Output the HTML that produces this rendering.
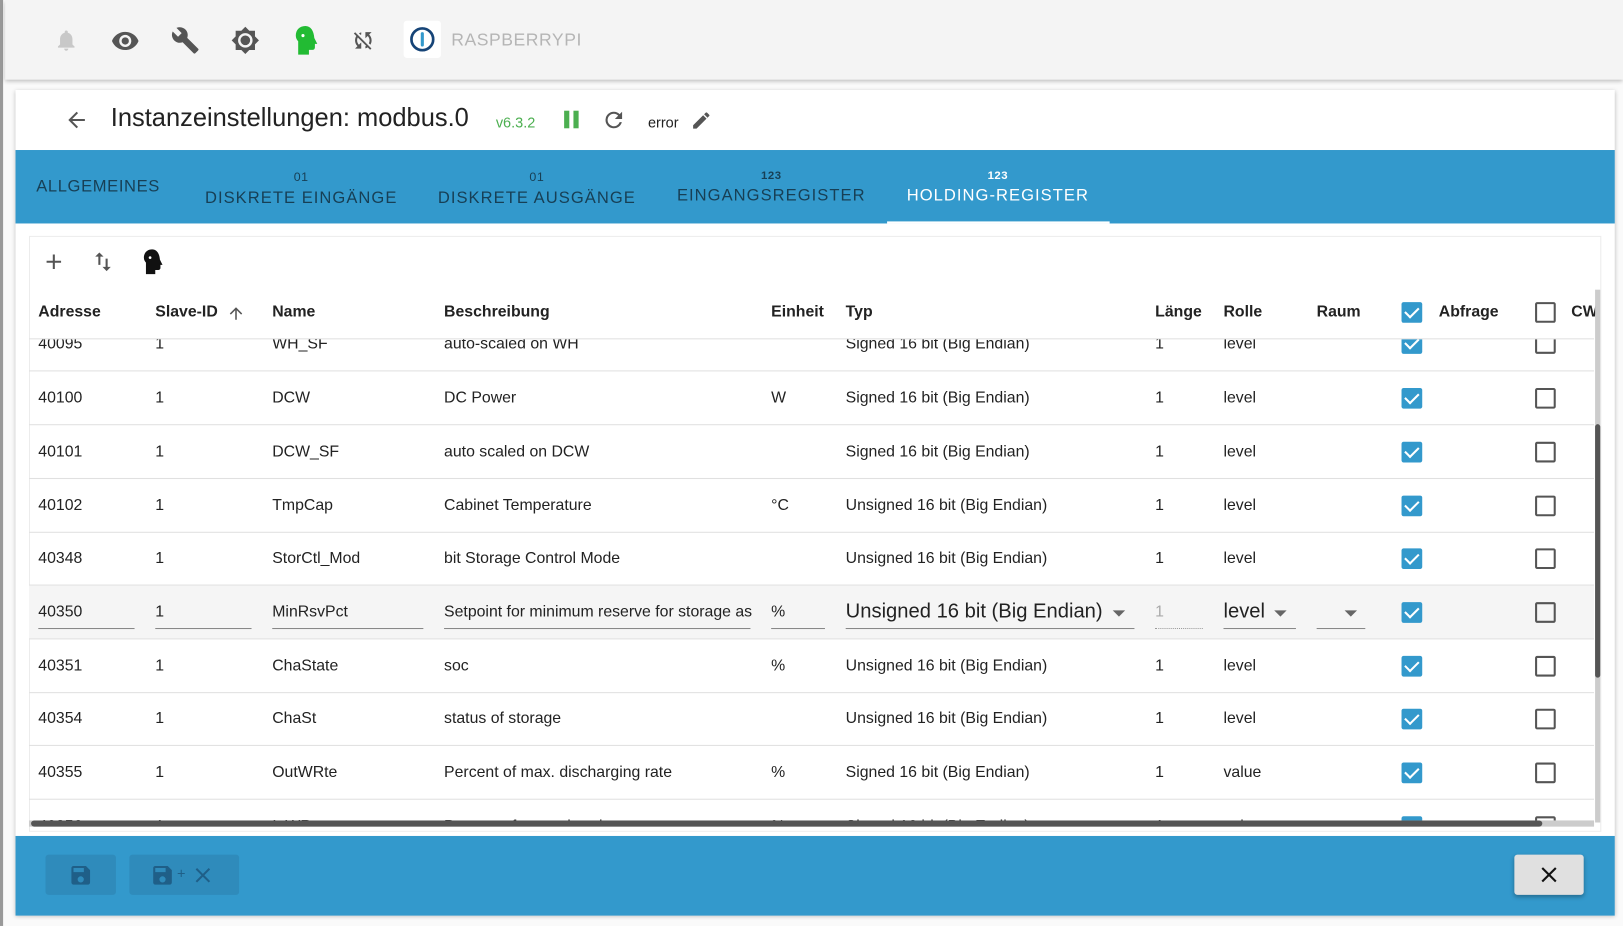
<!DOCTYPE html>
<html><head><meta charset="utf-8"><style>
*{box-sizing:border-box;margin:0;padding:0}
html,body{width:1623px;height:926px;overflow:hidden;background:#fff;font-family:"Liberation Sans",sans-serif}
#w{position:absolute;left:0;top:0;width:1568px;height:895px;transform:scale(1.0351,1.0346);transform-origin:0 0;background:#fafafa}
.a{position:absolute}
.top{left:5px;top:0;width:1563px;height:77px;background:#f4f4f4;box-shadow:0 2px 4px rgba(0,0,0,.25)}
.card{left:15px;top:87px;width:1545px;height:798px;background:#fff;box-shadow:0 1px 4px rgba(0,0,0,.25)}
.tabs{left:15px;top:145px;width:1545px;height:71px;background:#3399cc}
.tab{position:absolute;color:#173f55;font-size:16px;letter-spacing:1px;text-align:center}
.tab small{display:block;font-size:12px;margin-bottom:5px;letter-spacing:.5px}
.hd{position:absolute;top:293px;font-size:15.3px;font-weight:bold;color:#222}
.row{position:absolute;left:28px;width:1512px;height:52px;border-bottom:1px solid #e0e0e0;font-size:15.3px;color:#222}
.row span{position:absolute;top:17px;white-space:nowrap}
.cb{position:absolute;width:20px;height:20px;border-radius:2px}
.ck{background:#3399cc}
.ck::after{content:"";position:absolute;left:6px;top:2px;width:6px;height:11px;border:solid #fff;border-width:0 2.5px 2.5px 0;transform:rotate(45deg)}
.un{border:2px solid #555}
.ul{position:absolute;top:41px;height:1px;background:#888}
.tri{position:absolute;top:24px;width:0;height:0;border-left:6px solid transparent;border-right:6px solid transparent;border-top:6px solid #666}
</style></head><body><div id="w">
<div class="a" style="left:0;top:0;width:3px;height:895px;background:#999"></div>
<div class="a top"></div>
<svg class="a" style="left:52px;top:26px" width="24" height="26" viewBox="0 0 24 24"><path fill="#c8c8c8" d="M12 22a2 2 0 0 0 2-2h-4a2 2 0 0 0 2 2zm6-6v-5c0-3-1.6-5.6-4.5-6.3V4a1.5 1.5 0 0 0-3 0v.7C7.6 5.4 6 8 6 11v5l-2 2v1h16v-1z"/></svg>
<svg class="a" style="left:107px;top:25px" width="28" height="28" viewBox="0 0 24 24"><path fill="#555" d="M12 5C7 5 2.7 8.1 1 12.5 2.7 16.9 7 20 12 20s9.3-3.1 11-7.5C21.3 8.1 17 5 12 5zm0 12.5a5 5 0 1 1 0-10 5 5 0 0 1 0 10zm0-8a3 3 0 1 0 0 6 3 3 0 0 0 0-6z"/></svg>
<svg class="a" style="left:165px;top:25px" width="28" height="28" viewBox="0 0 24 24"><path fill="#555" d="M22.7 19l-9.1-9.1c.9-2.3.4-5-1.5-6.9-2-2-5-2.4-7.4-1.3L9 6 6 9 1.6 4.7C.4 7.1.9 10.1 2.9 12.1c1.9 1.9 4.6 2.4 6.9 1.5l9.1 9.1c.4.4 1 .4 1.4 0l2.3-2.3c.5-.4.5-1.1.1-1.4z"/></svg>
<svg class="a" style="left:223px;top:25px" width="28" height="28" viewBox="0 0 24 24"><path fill="#555" d="M20 8.7V4h-4.7L12 .7 8.7 4H4v4.7L.7 12 4 15.3V20h4.7l3.3 3.3 3.3-3.3H20v-4.7l3.3-3.3zM12 18a6 6 0 1 1 0-12 6 6 0 0 1 0 12zm0-10a4 4 0 1 0 0 8 4 4 0 0 0 0-8z"/></svg>
<svg class="a" style="left:283px;top:24px" width="24" height="30" viewBox="0 0 20 26"><path fill="#22bb33" d="M10 1C5 1 2 4.5 2 9c0 2 .8 3.5 2 4.8V25h9v-4h3a2 2 0 0 0 2-2v-3h2l-2.5-5C17 5 14.5 1 10 1z"/><circle cx="8" cy="9" r="1.3" fill="#fff"/></svg>
<svg class="a" style="left:339px;top:26px" width="24" height="26" viewBox="0 0 24 24"><path fill="#555" d="M10 6.35V4.26c-.8.21-1.550.54-2.23.96l1.46 1.46c.25-.12.5-.24.77-.33zm-7.14-.94l2.36 2.36C4.45 8.99 4 10.44 4 12c0 2.21.91 4.2 2.36 5.64L4 20h6v-6l-2.24 2.24C6.68 15.150 6 13.66 6 12c0-1 .25-1.94.68-2.77l8.08 8.08c-.25.13-.5.25-.77.34v2.09c.8-.21 1.55-.54 2.23-.96l2.36 2.36 1.27-1.27L4.14 4.14 2.86 5.41zM20 4h-6v6l2.24-2.24C17.32 8.85 18 10.34 18 12c0 1-.25 1.94-.68 2.77l1.46 1.46C19.55 15.01 20 13.56 20 12c0-2.21-.91-4.2-2.36-5.64L20 4z"/></svg>
<div class="a" style="left:390px;top:20px;width:36px;height:36px;background:#fff;border-radius:3px"></div>
<svg class="a" style="left:395px;top:25px" width="26" height="26" viewBox="0 0 26 26"><circle cx="13" cy="13" r="10.5" fill="none" stroke="#164477" stroke-width="2.6"/><rect x="11.5" y="6" width="3" height="14" rx="1.5" fill="#3399cc"/></svg>
<div class="a" style="left:436px;top:29px;font-size:17px;color:#b5b5b5;letter-spacing:.5px">RASPBERRYPI</div>

<div class="a card"></div>
<svg class="a" style="left:62px;top:104px" width="24" height="24" viewBox="0 0 24 24"><path fill="#555" d="M20 11H7.8l5.6-5.6L12 4l-8 8 8 8 1.4-1.4L7.8 13H20z"/></svg>
<div class="a" style="left:107px;top:101px;font-size:24.6px;color:#222">Instanzeinstellungen: modbus.0</div>
<div class="a" style="left:479px;top:110px;font-size:14px;color:#4caf50">v6.3.2</div>
<div class="a" style="left:545px;top:107px;width:5px;height:17px;background:#4caf50"></div>
<div class="a" style="left:554px;top:107px;width:5px;height:17px;background:#4caf50"></div>
<svg class="a" style="left:581px;top:104px" width="24" height="24" viewBox="0 0 24 24"><path fill="#555" d="M17.65 6.35A7.96 7.96 0 0 0 12 4a8 8 0 1 0 7.74 10h-2.08A6 6 0 1 1 12 6c1.66 0 3.14.69 4.22 1.78L13 11h7V4z"/></svg>
<div class="a" style="left:626px;top:110px;font-size:14px;color:#222">error</div>
<svg class="a" style="left:667px;top:106px" width="21" height="21" viewBox="0 0 24 24"><path fill="#555" d="M3 17.25V21h3.75L17.8 9.94l-3.75-3.75zM20.7 7.04a1 1 0 0 0 0-1.41l-2.34-2.34a1 1 0 0 0-1.41 0l-1.83 1.83 3.75 3.75z"/></svg>

<div class="a tabs"></div>
<div class="tab" style="left:35px;top:172px;letter-spacing:.6px">ALLGEMEINES</div>
<div class="tab" style="left:198px;top:164px"><small>01</small>DISKRETE EINGÄNGE</div>
<div class="tab" style="left:423px;top:164px"><small>01</small>DISKRETE AUSGÄNGE</div>
<div class="tab" style="left:654px;top:164px"><small style="font-weight:bold;font-size:11px">123</small>EINGANGSREGISTER</div>
<div class="tab" style="left:876px;top:164px;color:#fff"><small style="font-weight:bold;font-size:11px">123</small>HOLDING-REGISTER</div>
<div class="a" style="left:857px;top:214px;width:215px;height:2px;background:#fff"></div>

<div class="a" style="left:28px;top:228px;width:1519px;height:576px;border:1px solid #ececec"></div>
<svg class="a" style="left:40px;top:241px" width="24" height="24" viewBox="0 0 24 24"><path fill="#555" d="M19 13h-6v6h-2v-6H5v-2h6V5h2v6h6z"/></svg>
<svg class="a" style="left:88px;top:241px" width="24" height="24" viewBox="0 0 24 24"><path fill="#555" d="M8 3L4 7h3v8h2V7h3zm8 14v-8h-2v8h-3l4 4 4-4z"/></svg>
<svg class="a" style="left:136px;top:240px" width="22" height="26" viewBox="0 0 20 26"><path fill="#111" d="M10 1C5 1 2 4.5 2 9c0 2 .8 3.5 2 4.8V25h9v-4h3a2 2 0 0 0 2-2v-3h2l-2.5-5C17 5 14.5 1 10 1z"/><circle cx="8" cy="9" r="1.3" fill="#fff"/></svg>

<div class="hd" style="left:37px">Adresse</div>
<div class="hd" style="left:150px">Slave-ID</div>
<svg class="a" style="left:219px;top:294px" width="18" height="18" viewBox="0 0 24 24"><path fill="#555" d="M4 12l1.4 1.4L11 7.8V20h2V7.8l5.6 5.6L20 12l-8-8z"/></svg>
<div class="hd" style="left:263px">Name</div>
<div class="hd" style="left:429px">Beschreibung</div>
<div class="hd" style="left:745px">Einheit</div>
<div class="hd" style="left:817px">Typ</div>
<div class="hd" style="left:1116px">Länge</div>
<div class="hd" style="left:1182px">Rolle</div>
<div class="hd" style="left:1272px">Raum</div>
<div class="cb ck" style="left:1354px;top:292px"></div>
<div class="hd" style="left:1390px">Abfrage</div>
<div class="cb un" style="left:1483px;top:292px"></div>
<div class="hd" style="left:1518px;width:24px;overflow:hidden">CW</div>
<div class="a" style="left:28px;top:327px;width:1512px;height:1px;background:#e0e0e0"></div>

<div class="a" style="left:28px;top:328px;width:1512px;height:467px;overflow:hidden">
<div style="position:relative;left:-28px;top:-328px">
<div class="row" style="top:307px"><span style="left:9px">40095</span><span style="left:122px">1</span><span style="left:235px">WH_SF</span><span style="left:401px">auto-scaled on WH</span><span style="left:789px">Signed 16 bit (Big Endian)</span><span style="left:1088px">1</span><span style="left:1154px">level</span><div class="cb ck" style="left:1326px;top:15px"></div><div class="cb un" style="left:1455px;top:15px"></div></div>
<div class="row" style="top:359px"><span style="left:9px">40100</span><span style="left:122px">1</span><span style="left:235px">DCW</span><span style="left:401px">DC Power</span><span style="left:717px">W</span><span style="left:789px">Signed 16 bit (Big Endian)</span><span style="left:1088px">1</span><span style="left:1154px">level</span><div class="cb ck" style="left:1326px;top:16px"></div><div class="cb un" style="left:1455px;top:16px"></div></div>
<div class="row" style="top:411px"><span style="left:9px">40101</span><span style="left:122px">1</span><span style="left:235px">DCW_SF</span><span style="left:401px">auto scaled on DCW</span><span style="left:789px">Signed 16 bit (Big Endian)</span><span style="left:1088px">1</span><span style="left:1154px">level</span><div class="cb ck" style="left:1326px;top:16px"></div><div class="cb un" style="left:1455px;top:16px"></div></div>
<div class="row" style="top:463px"><span style="left:9px">40102</span><span style="left:122px">1</span><span style="left:235px">TmpCap</span><span style="left:401px">Cabinet Temperature</span><span style="left:717px">°C</span><span style="left:789px">Unsigned 16 bit (Big Endian)</span><span style="left:1088px">1</span><span style="left:1154px">level</span><div class="cb ck" style="left:1326px;top:16px"></div><div class="cb un" style="left:1455px;top:16px"></div></div>
<div class="row" style="top:514px"><span style="left:9px">40348</span><span style="left:122px">1</span><span style="left:235px">StorCtl_Mod</span><span style="left:401px">bit Storage Control Mode</span><span style="left:789px">Unsigned 16 bit (Big Endian)</span><span style="left:1088px">1</span><span style="left:1154px">level</span><div class="cb ck" style="left:1326px;top:16px"></div><div class="cb un" style="left:1455px;top:16px"></div></div>
<div class="row" style="top:566px;background:#f5f5f5"><span style="left:9px">40350</span><span style="left:122px">1</span><span style="left:235px">MinRsvPct</span><span style="left:401px;width:297px;overflow:hidden">Setpoint for minimum reserve for storage as</span><span style="left:717px">%</span><span style="left:789px;top:14px;font-size:19.5px">Unsigned 16 bit (Big Endian)</span><span style="left:1088px;color:#aaa">1</span><span style="left:1154px;top:14px;font-size:19.5px">level</span>
<div class="ul" style="left:9px;width:93px"></div><div class="ul" style="left:122px;width:93px"></div><div class="ul" style="left:235px;width:146px"></div><div class="ul" style="left:401px;width:296px"></div><div class="ul" style="left:717px;width:52px"></div><div class="ul" style="left:789px;width:279px"></div><div class="ul" style="left:1088px;width:46px;border-top:1px dotted #999;background:none"></div><div class="ul" style="left:1154px;width:70px"></div><div class="ul" style="left:1244px;width:47px"></div>
<div class="tri" style="left:1047px"></div><div class="tri" style="left:1203px"></div><div class="tri" style="left:1271px"></div>
<div class="cb ck" style="left:1326px;top:16px"></div><div class="cb un" style="left:1455px;top:16px"></div></div>
<div class="row" style="top:618px"><span style="left:9px">40351</span><span style="left:122px">1</span><span style="left:235px">ChaState</span><span style="left:401px">soc</span><span style="left:717px">%</span><span style="left:789px">Unsigned 16 bit (Big Endian)</span><span style="left:1088px">1</span><span style="left:1154px">level</span><div class="cb ck" style="left:1326px;top:16px"></div><div class="cb un" style="left:1455px;top:16px"></div></div>
<div class="row" style="top:669px"><span style="left:9px">40354</span><span style="left:122px">1</span><span style="left:235px">ChaSt</span><span style="left:401px">status of storage</span><span style="left:789px">Unsigned 16 bit (Big Endian)</span><span style="left:1088px">1</span><span style="left:1154px">level</span><div class="cb ck" style="left:1326px;top:16px"></div><div class="cb un" style="left:1455px;top:16px"></div></div>
<div class="row" style="top:721px"><span style="left:9px">40355</span><span style="left:122px">1</span><span style="left:235px">OutWRte</span><span style="left:401px">Percent of max. discharging rate</span><span style="left:717px">%</span><span style="left:789px">Signed 16 bit (Big Endian)</span><span style="left:1088px">1</span><span style="left:1154px">value</span><div class="cb ck" style="left:1326px;top:16px"></div><div class="cb un" style="left:1455px;top:16px"></div></div>
<div class="row" style="top:773px"><span style="left:9px">40356</span><span style="left:122px">1</span><span style="left:235px">InWRte</span><span style="left:401px">Percent of max. charging rate</span><span style="left:717px">%</span><span style="left:789px">Signed 16 bit (Big Endian)</span><span style="left:1088px">1</span><span style="left:1154px">value</span><div class="cb ck" style="left:1326px;top:16px"></div><div class="cb un" style="left:1455px;top:16px"></div></div>
</div></div>
<div class="a" style="left:28px;top:793px;width:1512px;height:6px;background:#ccc"></div>
<div class="a" style="left:30px;top:793px;width:1460px;height:6px;background:#555;border-radius:3px"></div>
<div class="a" style="left:1541px;top:280px;width:5px;height:515px;background:#ccc"></div>
<div class="a" style="left:1541px;top:410px;width:5px;height:245px;background:#555;border-radius:3px"></div>

<div class="a" style="left:15px;top:808px;width:1545px;height:77px;background:#3399cc"></div>
<div class="a" style="left:44px;top:826px;width:68px;height:39px;background:#2f8bbb;border-radius:3px"></div>
<svg class="a" style="left:66px;top:834px" width="24" height="24" viewBox="0 0 24 24"><path fill="#1f5f88" d="M17 3H5a2 2 0 0 0-2 2v14a2 2 0 0 0 2 2h14a2 2 0 0 0 2-2V7zm-5 16a3 3 0 1 1 0-6 3 3 0 0 1 0 6zm3-10H5V5h10z"/></svg>
<div class="a" style="left:125px;top:826px;width:106px;height:39px;background:#2f8bbb;border-radius:3px"></div>
<svg class="a" style="left:145px;top:834px" width="24" height="24" viewBox="0 0 24 24"><path fill="#1f5f88" d="M17 3H5a2 2 0 0 0-2 2v14a2 2 0 0 0 2 2h14a2 2 0 0 0 2-2V7zm-5 16a3 3 0 1 1 0-6 3 3 0 0 1 0 6zm3-10H5V5h10z"/></svg>
<div class="a" style="left:171px;top:836px;font-size:14px;color:#1f5f88">+</div>
<svg class="a" style="left:184px;top:834px" width="24" height="24" viewBox="0 0 24 24"><path fill="#1f5f88" d="M19 6.4L17.6 5 12 10.6 6.4 5 5 6.4 10.6 12 5 17.6 6.4 19 12 13.4 17.6 19 19 17.6 13.4 12z"/></svg>
<div class="a" style="left:1463px;top:826px;width:67px;height:39px;background:#e0e0e0;border-radius:3px;box-shadow:0 2px 4px rgba(0,0,0,.3)"></div>
<svg class="a" style="left:1484px;top:833px" width="25" height="25" viewBox="0 0 24 24"><path fill="#111" d="M19 6.4L17.6 5 12 10.6 6.4 5 5 6.4 10.6 12 5 17.6 6.4 19 12 13.4 17.6 19 19 17.6 13.4 12z"/></svg>
</div></body></html>
